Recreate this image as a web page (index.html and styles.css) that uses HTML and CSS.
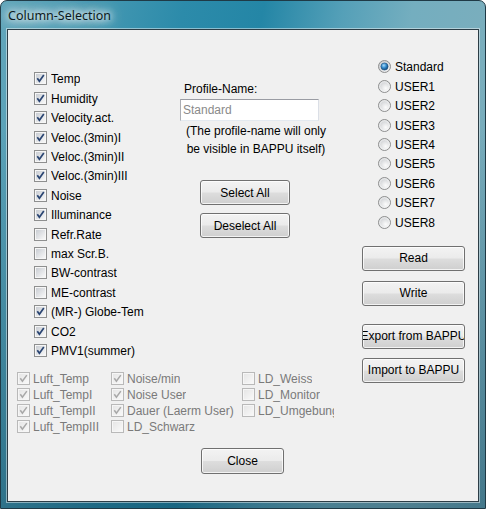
FILE: index.html
```html
<!DOCTYPE html>
<html>
<head>
<meta charset="utf-8">
<link rel="stylesheet" href="styles.css">
</head>
<body>
<svg class="defs" width="0" height="0" aria-hidden="true">
  <defs>
    <linearGradient id="cbg" x1="0" y1="0" x2="1" y2="1">
      <stop offset="0" stop-color="#c9cdd3"/><stop offset="1" stop-color="#f8f8f8"/>
    </linearGradient>
    <linearGradient id="cbgd" x1="0" y1="0" x2="1" y2="1">
      <stop offset="0" stop-color="#e6e6e6"/><stop offset="1" stop-color="#f8f8f8"/>
    </linearGradient>
    <radialGradient id="rbg" cx="0.6" cy="0.65" r="0.6">
      <stop offset="0" stop-color="#fcfcfc"/><stop offset="1" stop-color="#cfd1d4"/>
    </radialGradient>
    <radialGradient id="rdot" cx="0.4" cy="0.35" r="0.65">
      <stop offset="0" stop-color="#a9dcfb"/><stop offset="0.55" stop-color="#2f86c8"/><stop offset="1" stop-color="#134a7c"/>
    </radialGradient>
    <symbol id="box" viewBox="0 0 13 13">
      <rect x="0.5" y="0.5" width="12" height="12" fill="#f6f6f6" stroke="#8e8f8f"/>
      <rect x="2" y="2" width="9" height="9" fill="url(#cbg)"/>
    </symbol>
    <symbol id="boxd" viewBox="0 0 13 13">
      <rect x="0.5" y="0.5" width="12" height="12" fill="#f6f6f6" stroke="#b9b9b9"/>
      <rect x="2" y="2" width="9" height="9" fill="url(#cbgd)"/>
    </symbol>
    <symbol id="tick" viewBox="0 0 13 13">
      <path d="M3.3 6.3 L5.4 9.3 L9.8 3.1" fill="none" stroke="#2a4572" stroke-width="1.7"/>
    </symbol>
    <symbol id="tickd" viewBox="0 0 13 13">
      <path d="M3.3 6.3 L5.4 9.3 L9.8 3.1" fill="none" stroke="#a8a8a8" stroke-width="1.5"/>
    </symbol>
    <symbol id="rad" viewBox="0 0 13 13">
      <circle cx="6.5" cy="6.5" r="6" fill="url(#rbg)" stroke="#8e8f8f"/>
      <circle cx="6.5" cy="6.5" r="4.8" fill="none" stroke="#ffffff" stroke-opacity="0.6"/>
    </symbol>
    <symbol id="radon" viewBox="0 0 13 13">
      <circle cx="6.5" cy="6.5" r="6" fill="url(#rbg)" stroke="#8e8f8f"/>
      <circle cx="6.5" cy="6.5" r="3.6" fill="url(#rdot)" stroke="#1c4f7c" stroke-width="0.6"/>
    </symbol>
  </defs>
</svg>

<div class="window">
  <div class="titlebar"><span class="title">Column-Selection</span></div>
  <div class="client">
    <div class="main">
      <div class="leftpart">
        <div class="upper">
          <div class="checklist">
            <label class="cb"><svg class="ic"><use href="#box"/><use href="#tick"/></svg><span class="lbl">Temp</span></label>
            <label class="cb"><svg class="ic"><use href="#box"/><use href="#tick"/></svg><span class="lbl">Humidity</span></label>
            <label class="cb"><svg class="ic"><use href="#box"/><use href="#tick"/></svg><span class="lbl">Velocity.act.</span></label>
            <label class="cb"><svg class="ic"><use href="#box"/><use href="#tick"/></svg><span class="lbl">Veloc.(3min)I</span></label>
            <label class="cb"><svg class="ic"><use href="#box"/><use href="#tick"/></svg><span class="lbl">Veloc.(3min)II</span></label>
            <label class="cb"><svg class="ic"><use href="#box"/><use href="#tick"/></svg><span class="lbl">Veloc.(3min)III</span></label>
            <label class="cb"><svg class="ic"><use href="#box"/><use href="#tick"/></svg><span class="lbl">Noise</span></label>
            <label class="cb"><svg class="ic"><use href="#box"/><use href="#tick"/></svg><span class="lbl">Illuminance</span></label>
            <label class="cb"><svg class="ic"><use href="#box"/></svg><span class="lbl">Refr.Rate</span></label>
            <label class="cb"><svg class="ic"><use href="#box"/></svg><span class="lbl">max Scr.B.</span></label>
            <label class="cb"><svg class="ic"><use href="#box"/></svg><span class="lbl">BW-contrast</span></label>
            <label class="cb"><svg class="ic"><use href="#box"/></svg><span class="lbl">ME-contrast</span></label>
            <label class="cb"><svg class="ic"><use href="#box"/><use href="#tick"/></svg><span class="lbl">(MR-) Globe-Temp</span></label>
            <label class="cb"><svg class="ic"><use href="#box"/><use href="#tick"/></svg><span class="lbl">CO2</span></label>
            <label class="cb"><svg class="ic"><use href="#box"/><use href="#tick"/></svg><span class="lbl">PMV1(summer)</span></label>
          </div>
          <div class="middle">
            <div class="plabel">Profile-Name:</div>
            <div class="textbox">Standard</div>
            <div class="note">(The profile-name will only<br>be visible in BAPPU itself)</div>
            <div class="btn btn-sel">Select All</div>
            <div class="btn btn-desel">Deselect All</div>
          </div>
        </div>
        <div class="bottomgrid">
          <label class="cb dis"><svg class="ic"><use href="#boxd"/><use href="#tickd"/></svg><span class="lbl">Luft_Temp</span></label>
          <label class="cb dis"><svg class="ic"><use href="#boxd"/><use href="#tickd"/></svg><span class="lbl">Luft_TempI</span></label>
          <label class="cb dis"><svg class="ic"><use href="#boxd"/><use href="#tickd"/></svg><span class="lbl">Luft_TempII</span></label>
          <label class="cb dis"><svg class="ic"><use href="#boxd"/><use href="#tickd"/></svg><span class="lbl">Luft_TempIII</span></label>
          <label class="cb dis"><svg class="ic"><use href="#boxd"/><use href="#tickd"/></svg><span class="lbl">Noise/min</span></label>
          <label class="cb dis"><svg class="ic"><use href="#boxd"/><use href="#tickd"/></svg><span class="lbl">Noise User</span></label>
          <label class="cb dis"><svg class="ic"><use href="#boxd"/><use href="#tickd"/></svg><span class="lbl">Dauer (Laerm User)</span></label>
          <label class="cb dis"><svg class="ic"><use href="#boxd"/></svg><span class="lbl">LD_Schwarz</span></label>
          <label class="cb dis"><svg class="ic"><use href="#boxd"/></svg><span class="lbl">LD_Weiss</span></label>
          <label class="cb dis"><svg class="ic"><use href="#boxd"/></svg><span class="lbl">LD_Monitor</span></label>
          <label class="cb dis"><svg class="ic"><use href="#boxd"/></svg><span class="lbl">LD_Umgebung</span></label>
        </div>
      </div>
      <div class="rightpart">
        <div class="radios">
          <label class="rb"><svg class="ic"><use href="#radon"/></svg><span>Standard</span></label>
          <label class="rb"><svg class="ic"><use href="#rad"/></svg><span>USER1</span></label>
          <label class="rb"><svg class="ic"><use href="#rad"/></svg><span>USER2</span></label>
          <label class="rb"><svg class="ic"><use href="#rad"/></svg><span>USER3</span></label>
          <label class="rb"><svg class="ic"><use href="#rad"/></svg><span>USER4</span></label>
          <label class="rb"><svg class="ic"><use href="#rad"/></svg><span>USER5</span></label>
          <label class="rb"><svg class="ic"><use href="#rad"/></svg><span>USER6</span></label>
          <label class="rb"><svg class="ic"><use href="#rad"/></svg><span>USER7</span></label>
          <label class="rb"><svg class="ic"><use href="#rad"/></svg><span>USER8</span></label>
        </div>
        <div class="btn btn-r btn-read">Read</div>
        <div class="btn btn-r btn-write">Write</div>
        <div class="btn btn-r btn-export"><span>Export from BAPPU</span></div>
        <div class="btn btn-r btn-import"><span>Import to BAPPU</span></div>
      </div>
    </div>
    <div class="footer">
      <div class="btn btn-close">Close</div>
    </div>
  </div>
</div>
</body>
</html>
```
FILE: styles.css
```css
* { box-sizing: border-box; }
html, body { margin: 0; padding: 0; }
body {
  width: 486px;
  height: 509px;
  overflow: hidden;
  background: #ffffff;
  font-family: "Liberation Sans", Arial, sans-serif;
  font-size: 12px;
  color: #000;
}
.defs { position: absolute; width: 0; height: 0; overflow: hidden; }

.window {
  width: 486px;
  height: 509px;
  border: 1px solid #1f3a46;
  border-radius: 7px 7px 0 0;
  padding: 0 6px 6px 6px;
  background:
    linear-gradient(to bottom, rgba(0,0,0,0) 0%, rgba(0,0,0,0) 25%, rgba(6,50,70,0.38) 100%),
    linear-gradient(100deg, #63a6bb 0%, #4a9bb4 14%, #2c8baa 32%, #2486a6 46%, #55a0b8 60%, #74aebf 72%, #7aaebd 86%, #6aa3b5 100%);
  display: flex;
  flex-direction: column;
}
.titlebar {
  height: 28px;
  padding-left: 1px;
  display: flex;
  align-items: center;
}
.title {
  font-family: "Noto Sans", "Open Sans", sans-serif;
  font-size: 12.5px;
  color: #0c1a20;
  padding-top: 1px;
  text-shadow: 0 0 6px #ffffff, 0 0 10px #ffffff, 0 0 14px rgba(255,255,255,0.9), 0 0 18px rgba(255,255,255,0.8);
}
.client {
  width: 472px;
  height: 473px;
  border: 1px solid #2c3d46;
  box-shadow: 0 0 0 1px rgba(255,255,255,0.45);
  background: #f0f0f0;
  display: flex;
  flex-direction: column;
}

.main { display: flex; }
.leftpart { width: 354px; padding-left: 9px; }
.upper {
  display: grid;
  grid-template-columns: 146px 182px;
  padding-left: 17px;
  align-items: start;
}
.checklist { padding-top: 39.3px; display: flex; flex-direction: column; }

.cb {
  display: flex;
  align-items: center;
  height: 19.4px;
  width: 110px;
  overflow: hidden;
  white-space: nowrap;
}
.ic { width: 13px; height: 13px; flex: none; }
.cb .lbl { margin-left: 4px; overflow: hidden; padding-top: 1px; }
.cb.dis { color: #7a7a7a; height: 16px; width: auto; }
.cb.dis .lbl { margin-left: 3px; }

.middle { padding-top: 52px; display: flex; flex-direction: column; align-items: flex-start; }
.plabel { padding-left: 4px; line-height: 14px; }
.textbox {
  margin-top: 3px;
  width: 139px;
  height: 22px;
  border: 1px solid #abadb3;
  border-top-color: #9a9ca3;
  border-bottom-color: #e3e9ef;
  border-right-color: #dbdfe6;
  background: #fff;
  color: #8a8a8a;
  padding-left: 2px;
  line-height: 20px;
}
.note {
  margin-top: 1px;
  width: 152px;
  text-align: center;
  line-height: 18px;
  white-space: nowrap;
}

.btn {
  display: flex;
  align-items: center;
  justify-content: center;
  border: 1px solid #707070;
  border-radius: 3px;
  background: linear-gradient(to bottom, #f3f3f3 0%, #ebebeb 48%, #dddddd 52%, #cfcfcf 100%);
  box-shadow: inset 0 0 0 1px rgba(255,255,255,0.75);
  white-space: nowrap;
  overflow: hidden;
  color: #000;
}
.btn-sel { margin-top: 22px; margin-left: 20px; width: 90px; height: 25px; }
.btn-desel { margin-top: 8px; margin-left: 20px; width: 90px; height: 25px; }

.bottomgrid {
  margin-top: 10.7px;
  display: grid;
  grid-template-columns: 94px 131px 92px;
  grid-template-rows: repeat(4, 16px);
  grid-auto-flow: column;
}
.bottomgrid .cb { overflow: hidden; }

.rightpart { width: 116px; padding-top: 27.3px; display: flex; flex-direction: column; }
.radios { padding-left: 16px; display: flex; flex-direction: column; }
.rb { display: flex; align-items: center; height: 19.4px; white-space: nowrap; }
.rb span { margin-left: 4px; padding-top: 1px; }
.btn-r { width: 103px; height: 25px; flex: none; }
.btn-read { margin-top: 14.1px; }
.btn-write { margin-top: 10px; }
.btn-export { margin-top: 18px; }
.btn-import { margin-top: 9px; }
.btn-r span { flex: none; }

.footer { margin-top: 13px; padding-left: 193px; }
.btn-close { width: 83px; height: 26px; }
```
